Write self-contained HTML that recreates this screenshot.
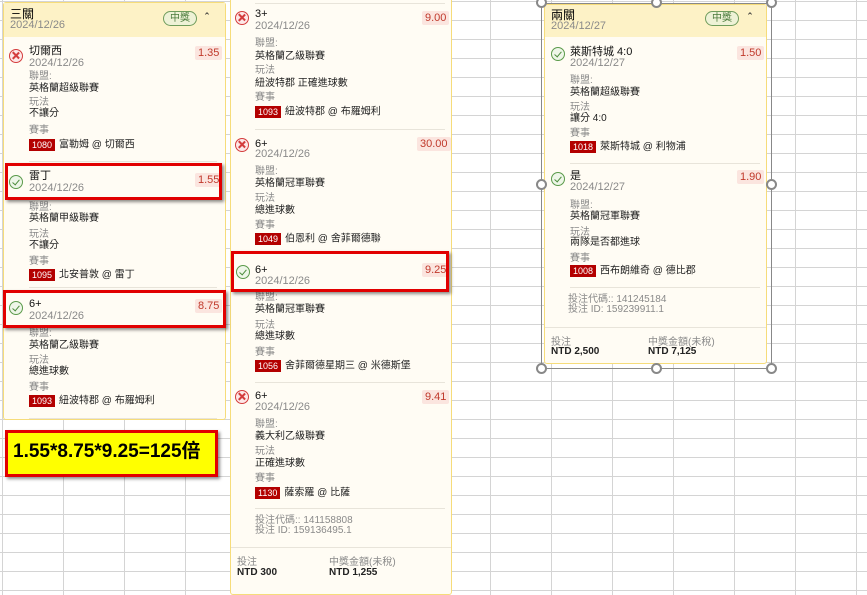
<!DOCTYPE html>
<html><head><meta charset="utf-8"><style>
*{margin:0;padding:0;box-sizing:border-box}
body{width:867px;height:583px;overflow:hidden;position:relative;background:#fff;font-family:"Liberation Sans","Noto Sans CJK TC",sans-serif;
background-image:linear-gradient(to right,#d4d4d4 1px,transparent 1px),linear-gradient(to bottom,#d4d4d4 1px,transparent 1px);
background-size:61px 19px;background-position:2px 1px}
.a{position:absolute;white-space:nowrap;line-height:12px}
.card{position:absolute;background:#fffcf4;border:1px solid #f6dc7a;border-radius:3px}
.hd{position:absolute;background:#fdf2c6}
.ti{font-size:11px;color:#111}
.dt{font-size:11px;color:#8a8a8a}
.lb{font-size:10px;color:#8a8a8a}
.v{font-size:10px;color:#222}
.od{position:absolute;background:#fbe5df;color:#c0392b;font-size:11px;line-height:14px;height:14px;padding:0 3px;border-radius:2px}
.bd{display:inline-block;background:#b30000;color:#fff;font-size:9px;line-height:12px;padding:0 3px;margin-right:4px;vertical-align:middle}
.sep{position:absolute;height:1px;background:#e8e4da}
.pill{position:absolute;border:1px solid #6f9c5c;background:#eef2d6;color:#4a7a3a;font-size:10px;line-height:13px;text-align:center;border-radius:8px;width:34px;height:15px}
.car{position:absolute;font-size:11px;color:#333;font-weight:bold}
.x,.ok{position:absolute;width:14px;height:14px;border-radius:50%}
.x{border:1.5px solid #d43c3c;background:#fde8e8}
.ok{border:1.5px solid #5a9a4a;background:#eef6e8}
.x:before,.x:after{content:"";position:absolute;left:5px;top:1px;width:1.5px;height:9px;background:#d43c3c;transform:rotate(45deg)}
.x:after{transform:rotate(-45deg)}
.ok:before{content:"";position:absolute;left:3.5px;top:2px;width:3px;height:6px;border-right:1.5px solid #4a8a3a;border-bottom:1.5px solid #4a8a3a;transform:rotate(40deg)}
.rb{position:absolute;border:3px solid #e10000;box-shadow:2px 2px 3px rgba(0,0,0,.45)}
.h{position:absolute;width:11px;height:11px;border-radius:50%;border:2px solid #888;background:#fff}
.b{font-weight:bold}
</style></head><body>

<!-- Card 1 -->
<div class="card" style="left:3px;top:2px;width:223px;height:418px"></div>
<div class="hd" style="left:4px;top:3px;width:221px;height:34px"></div>
<div class="a" style="left:10px;top:8px;font-size:12px">三關</div>
<div class="a dt" style="left:10px;top:19px">2024/12/26</div>
<div class="pill" style="left:163px;top:11px">中獎</div>
<div class="car" style="left:205px;top:12px">&#710;</div>

<div class="x" style="left:9px;top:49px"></div>
<div class="a ti" style="left:29px;top:45px">切爾西</div>
<div class="a dt" style="left:29px;top:57px">2024/12/26</div>
<div class="od" style="left:195px;top:46px">1.35</div>
<div class="a lb" style="left:29px;top:71px">聯盟:</div>
<div class="a v" style="left:29px;top:83px">英格蘭超級聯賽</div>
<div class="a lb" style="left:29px;top:97px">玩法</div>
<div class="a v" style="left:29px;top:108px">不讓分</div>
<div class="a lb" style="left:29px;top:125px">賽事</div>
<div class="a v" style="left:29px;top:139px"><span class="bd">1080</span>富勒姆 @ 切爾西</div>
<div class="sep" style="left:29px;top:161px;width:188px"></div>

<div class="ok" style="left:9px;top:175px"></div>
<div class="a ti" style="left:29px;top:170px">雷丁</div>
<div class="a dt" style="left:29px;top:182px">2024/12/26</div>
<div class="od" style="left:195px;top:173px">1.55</div>
<div class="a lb" style="left:29px;top:202px">聯盟:</div>
<div class="a v" style="left:29px;top:213px">英格蘭甲級聯賽</div>
<div class="a lb" style="left:29px;top:229px">玩法</div>
<div class="a v" style="left:29px;top:240px">不讓分</div>
<div class="a lb" style="left:29px;top:256px">賽事</div>
<div class="a v" style="left:29px;top:269px"><span class="bd">1095</span>北安普敦 @ 雷丁</div>
<div class="sep" style="left:29px;top:287px;width:188px"></div>

<div class="ok" style="left:9px;top:301px"></div>
<div class="a ti" style="left:29px;top:298px">6+</div>
<div class="a dt" style="left:29px;top:310px">2024/12/26</div>
<div class="od" style="left:195px;top:299px">8.75</div>
<div class="a lb" style="left:29px;top:328px">聯盟:</div>
<div class="a v" style="left:29px;top:340px">英格蘭乙級聯賽</div>
<div class="a lb" style="left:29px;top:355px">玩法</div>
<div class="a v" style="left:29px;top:366px">總進球數</div>
<div class="a lb" style="left:29px;top:382px">賽事</div>
<div class="a v" style="left:29px;top:395px"><span class="bd">1093</span>紐波特郡 @ 布羅姆利</div>
<div class="sep" style="left:29px;top:418px;width:188px"></div>

<!-- Card 2 -->
<div class="card" style="left:230px;top:-5px;width:222px;height:600px"></div>
<div class="sep" style="left:255px;top:3px;width:190px"></div>
<div class="x" style="left:235px;top:11px"></div>
<div class="a ti" style="left:255px;top:8px">3+</div>
<div class="a dt" style="left:255px;top:20px">2024/12/26</div>
<div class="od" style="left:422px;top:11px">9.00</div>
<div class="a lb" style="left:255px;top:38px">聯盟:</div>
<div class="a v" style="left:255px;top:51px">英格蘭乙級聯賽</div>
<div class="a lb" style="left:255px;top:65px">玩法</div>
<div class="a v" style="left:255px;top:78px">紐波特郡 正確進球數</div>
<div class="a lb" style="left:255px;top:92px">賽事</div>
<div class="a v" style="left:255px;top:106px"><span class="bd">1093</span>紐波特郡 @ 布羅姆利</div>
<div class="sep" style="left:255px;top:129px;width:190px"></div>

<div class="x" style="left:235px;top:138px"></div>
<div class="a ti" style="left:255px;top:138px">6+</div>
<div class="a dt" style="left:255px;top:148px">2024/12/26</div>
<div class="od" style="left:417px;top:137px">30.00</div>
<div class="a lb" style="left:255px;top:166px">聯盟:</div>
<div class="a v" style="left:255px;top:178px">英格蘭冠軍聯賽</div>
<div class="a lb" style="left:255px;top:193px">玩法</div>
<div class="a v" style="left:255px;top:205px">總進球數</div>
<div class="a lb" style="left:255px;top:220px">賽事</div>
<div class="a v" style="left:255px;top:233px"><span class="bd">1049</span>伯恩利 @ 舍菲爾德聯</div>

<div class="ok" style="left:236px;top:265px"></div>
<div class="a ti" style="left:255px;top:264px">6+</div>
<div class="a dt" style="left:255px;top:275px">2024/12/26</div>
<div class="od" style="left:422px;top:263px">9.25</div>
<div class="a lb" style="left:255px;top:292px">聯盟:</div>
<div class="a v" style="left:255px;top:304px">英格蘭冠軍聯賽</div>
<div class="a lb" style="left:255px;top:320px">玩法</div>
<div class="a v" style="left:255px;top:331px">總進球數</div>
<div class="a lb" style="left:255px;top:347px">賽事</div>
<div class="a v" style="left:255px;top:360px"><span class="bd">1056</span>舍菲爾德星期三 @ 米德斯堡</div>
<div class="sep" style="left:255px;top:382px;width:190px"></div>

<div class="x" style="left:235px;top:390px"></div>
<div class="a ti" style="left:255px;top:390px">6+</div>
<div class="a dt" style="left:255px;top:401px">2024/12/26</div>
<div class="od" style="left:422px;top:390px">9.41</div>
<div class="a lb" style="left:255px;top:419px">聯盟:</div>
<div class="a v" style="left:255px;top:431px">義大利乙級聯賽</div>
<div class="a lb" style="left:255px;top:446px">玩法</div>
<div class="a v" style="left:255px;top:458px">正確進球數</div>
<div class="a lb" style="left:255px;top:473px">賽事</div>
<div class="a v" style="left:255px;top:487px"><span class="bd">1130</span>薩索羅 @ 比薩</div>
<div class="sep" style="left:255px;top:508px;width:190px"></div>
<div class="a lb" style="left:255px;top:516px;line-height:10px">投注代碼:: 141158808<br>投注 ID: 159136495.1</div>
<div class="sep" style="left:231px;top:547px;width:220px"></div>
<div class="a lb" style="left:237px;top:558px;line-height:10px">投注</div>
<div class="a v b" style="left:237px;top:568px;line-height:10px">NTD 300</div>
<div class="a lb" style="left:329px;top:558px;line-height:10px">中獎金額(未稅)</div>
<div class="a v b" style="left:329px;top:568px;line-height:10px">NTD 1,255</div>

<!-- Card 3 -->
<div style="position:absolute;left:541px;top:3px;width:231px;height:366px;border:1px solid #888"></div>
<div class="card" style="left:544px;top:4px;width:223px;height:360px"></div>
<div class="hd" style="left:545px;top:5px;width:221px;height:32px"></div>
<div class="a" style="left:551px;top:9px;font-size:12px">兩關</div>
<div class="a dt" style="left:551px;top:20px">2024/12/27</div>
<div class="pill" style="left:705px;top:11px">中獎</div>
<div class="car" style="left:748px;top:12px">&#710;</div>

<div class="ok" style="left:551px;top:47px"></div>
<div class="a ti" style="left:570px;top:46px">萊斯特城 4:0</div>
<div class="a dt" style="left:570px;top:57px">2024/12/27</div>
<div class="od" style="left:737px;top:46px">1.50</div>
<div class="a lb" style="left:570px;top:75px">聯盟:</div>
<div class="a v" style="left:570px;top:87px">英格蘭超級聯賽</div>
<div class="a lb" style="left:570px;top:102px">玩法</div>
<div class="a v" style="left:570px;top:113px">讓分 4:0</div>
<div class="a lb" style="left:570px;top:128px">賽事</div>
<div class="a v" style="left:570px;top:141px"><span class="bd">1018</span>萊斯特城 @ 利物浦</div>
<div class="sep" style="left:570px;top:163px;width:190px"></div>

<div class="ok" style="left:551px;top:172px"></div>
<div class="a ti" style="left:570px;top:170px">是</div>
<div class="a dt" style="left:570px;top:181px">2024/12/27</div>
<div class="od" style="left:737px;top:170px">1.90</div>
<div class="a lb" style="left:570px;top:200px">聯盟:</div>
<div class="a v" style="left:570px;top:211px">英格蘭冠軍聯賽</div>
<div class="a lb" style="left:570px;top:227px">玩法</div>
<div class="a v" style="left:570px;top:237px">兩隊是否都進球</div>
<div class="a lb" style="left:570px;top:253px">賽事</div>
<div class="a v" style="left:570px;top:265px"><span class="bd">1008</span>西布朗維奇 @ 德比郡</div>
<div class="sep" style="left:570px;top:287px;width:190px"></div>
<div class="a lb" style="left:568px;top:295px;line-height:10px">投注代碼:: 141245184<br>投注 ID: 159239911.1</div>
<div class="sep" style="left:545px;top:327px;width:221px"></div>
<div class="a lb" style="left:551px;top:338px;line-height:10px">投注</div>
<div class="a v b" style="left:551px;top:347px;line-height:10px">NTD 2,500</div>
<div class="a lb" style="left:648px;top:338px;line-height:10px">中獎金額(未稅)</div>
<div class="a v b" style="left:648px;top:347px;line-height:10px">NTD 7,125</div>

<div class="h" style="left:536px;top:-3px"></div>
<div class="h" style="left:651px;top:-3px"></div>
<div class="h" style="left:766px;top:-3px"></div>
<div class="h" style="left:536px;top:179px"></div>
<div class="h" style="left:766px;top:179px"></div>
<div class="h" style="left:536px;top:363px"></div>
<div class="h" style="left:651px;top:363px"></div>
<div class="h" style="left:766px;top:363px"></div>

<!-- Red highlight boxes -->
<div class="rb" style="left:5px;top:163px;width:217px;height:37px"></div>
<div class="rb" style="left:3px;top:290px;width:223px;height:38px"></div>
<div class="rb" style="left:231px;top:251px;width:218px;height:41px"></div>

<div class="rb" style="left:5px;top:430px;width:213px;height:47px;background:#ffff00"></div>
<div class="a" style="left:13px;top:441px;font-size:19px;line-height:22px;font-weight:bold;color:#000">1.55*8.75*9.25=125倍</div>
</body></html>
